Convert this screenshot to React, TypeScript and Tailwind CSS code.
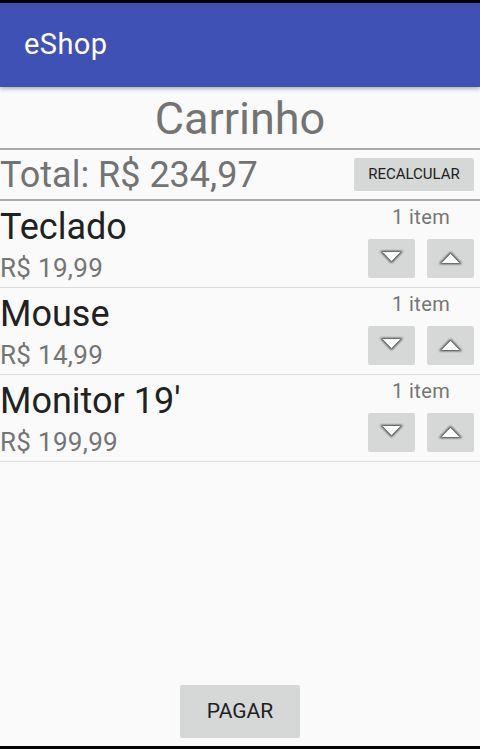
import React from 'react'

interface CartItem {
  name: string
  price: string
  qty: number
}

const items: CartItem[] = [
  { name: 'Teclado', price: 'R$ 19,99', qty: 1 },
  { name: 'Mouse', price: 'R$ 14,99', qty: 1 },
  { name: "Monitor 19'", price: 'R$ 199,99', qty: 1 },
]

function Arrow({ up, id }: { up?: boolean; id: string }) {
  const pts = up ? '11.5,13 23,25 0,25' : '0,12 23,12 11.5,24'
  const c = up ? 21 : 16
  return (
    <svg width="47" height="39" viewBox="-12 0 47 39">
      <defs>
        <filter id={id} x="-50%" y="-50%" width="200%" height="200%">
          <feGaussianBlur stdDeviation="1.1" />
        </filter>
      </defs>
      <polygon points={pts} fill="#1f1f1f" opacity="0.85" filter={`url(#${id})`} />
      <polygon
        points={pts}
        fill="#fff"
        transform={`translate(11.5 ${c}) scale(0.78) translate(-11.5 -${c})`}
      />
    </svg>
  )
}

function ItemRow({ item, idx }: { item: CartItem; idx: number }) {
  return (
    <div className="flex h-[87px] border-b border-[#dcdcdc]">
      <div className="flex flex-1 flex-col">
        <span className="mt-[6px] text-[36px] leading-[40px] text-[#212121]">{item.name}</span>
        <span className="mt-[6px] text-[26px] leading-[30px] tracking-[0.3px] text-[#757575]">
          {item.price}
        </span>
      </div>
      <div className="mr-[6px] flex w-[106px] flex-col items-center">
        <span className="mt-[4px] text-[20px] leading-[24px] tracking-[0.4px] text-[#757575]">
          {item.qty} item
        </span>
        <div className="mt-[10px] flex gap-[12px]">
          <button className="h-[39px] w-[47px] rounded-[2px] bg-[#d6d7d7]">
            <Arrow id={`d${idx}`} />
          </button>
          <button className="h-[39px] w-[47px] rounded-[2px] bg-[#d6d7d7]">
            <Arrow up id={`u${idx}`} />
          </button>
        </div>
      </div>
    </div>
  )
}

export default function App() {
  return (
    <div
      className="flex h-[749px] w-[480px] flex-col overflow-hidden bg-[#fafafa]"
      style={{ fontFamily: 'Roboto, "Noto Sans", sans-serif' }}
    >
      <div className="h-[3px] bg-black" />
      <header className="relative z-10 flex h-[84px] items-center bg-[#3f51b5] px-6 shadow-[0_2px_4px_rgba(0,0,0,0.3)]">
        <span className="text-[29px] tracking-[0.4px] text-white">eShop</span>
      </header>

      <main className="flex flex-1 flex-col">
        <h1 className="h-[61px] pt-[6px] text-center text-[45px] leading-[52px] text-[#737373]">
          Carrinho
        </h1>
        <div className="h-[2px] bg-[#a9a9a9]" />
        <div className="flex h-[49px] items-center justify-between">
          <span className="text-[36px] leading-[40px] text-[#737373]">Total: R$ 234,97</span>
          <button className="mr-[6px] h-[33px] w-[120px] rounded-[2px] bg-[#d6d7d7] text-[15px] text-[#212121]">
            RECALCULAR
          </button>
        </div>
        <div className="h-[2px] bg-[#a9a9a9]" />

        {items.map((item, i) => (
          <ItemRow key={item.name} item={item} idx={i} />
        ))}

        <div className="flex-1" />
        <div className="flex justify-center pb-[8px]">
          <button className="h-[53px] w-[120px] rounded-[2px] bg-[#d6d7d7] text-[21px] text-[#212121]">
            PAGAR
          </button>
        </div>
      </main>
      <div className="h-[3px] bg-black" />
    </div>
  )
}
